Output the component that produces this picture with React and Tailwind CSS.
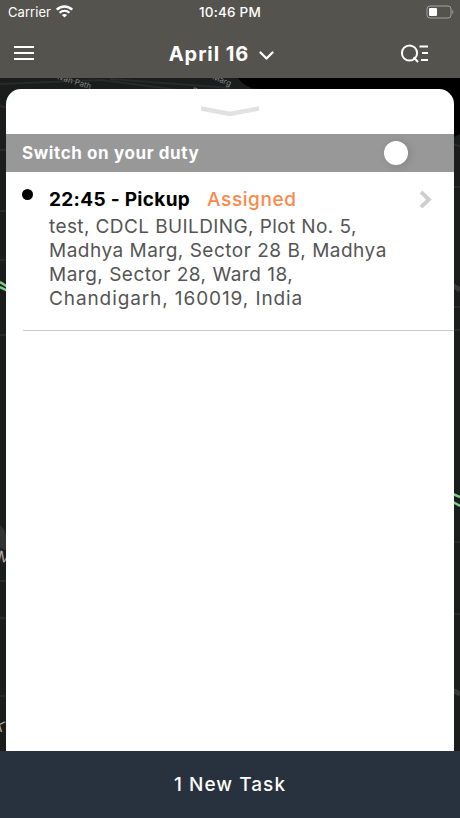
const addressLines = [
  { text: "test, CDCL BUILDING, Plot No. 5,", spacing: "tracking-[0.4px]" },
  { text: "Madhya Marg, Sector 28 B, Madhya", spacing: "tracking-[0.5px]" },
  { text: "Marg, Sector 28, Ward 18,", spacing: "tracking-[0.5px]" },
  { text: "Chandigarh, 160019, India", spacing: "tracking-[0.9px]" },
];

function StatusBar() {
  return (
    <div className="grid h-6 grid-cols-3 items-center pl-2 pr-[6px] text-[13.5px] leading-6">
      <div className="flex items-center gap-[5px]">
        <span className="text-[13px] tracking-[0.05px]">Carrier</span>
        <svg className="-mt-[1px]" width="17" height="13" viewBox="0 0 17 13" fill="none">
          <path d="M.8 4.7C5 .4 12 .4 16.2 4.7" stroke="white" strokeWidth="2.5" />
          <path d="M3.6 7.7C6.4 5.1 10.6 5.1 13.4 7.7" stroke="white" strokeWidth="2.2" />
          <path d="M5.9 10C7.4 8.6 9.6 8.6 11.1 10L8.5 12.6Z" fill="white" />
        </svg>
      </div>
      <span className="-ml-[2px] whitespace-nowrap text-center font-medium tracking-[0.2px]">10:46 PM</span>
      <svg className="justify-self-end" width="28" height="14" viewBox="0 0 28 14" fill="none">
        <rect x="1" y="1" width="24" height="12" rx="3" stroke="#a4a39f" />
        <rect x="3" y="3" width="8" height="8" rx="1" fill="white" />
        <path d="M26.3 5C27.7 5.6 27.7 8.4 26.3 9Z" fill="#a4a39f" />
      </svg>
    </div>
  );
}

function Header() {
  return (
    <header className="relative h-[78px] shrink-0 bg-[#55534e] text-white">
      <StatusBar />
      <div className="grid h-[54px] grid-cols-[60px_1fr_60px] items-center">
        <button className="mt-[3px] pl-[14px]" aria-label="Menu">
          <svg width="20" height="14" viewBox="0 0 20 14" stroke="white" strokeWidth="2">
            <path d="M0 1H20M0 7H20M0 13H20" />
          </svg>
        </button>
        <button className="flex items-center justify-center gap-[10px] pr-[18px]">
          <span className="mt-[5px] whitespace-nowrap pl-[1px] text-[20px] leading-6 font-bold tracking-[0.95px]">April 16</span>
          <svg className="mt-[10px]" width="15" height="10" viewBox="0 0 15 10" fill="none">
            <path d="M1.5 1.5L7.5 7.5L13.5 1.5" stroke="white" strokeWidth="2.2" strokeLinecap="round" strokeLinejoin="round" />
          </svg>
        </button>
        <button className="mt-[5px]" aria-label="Search">
          <svg width="29" height="20" viewBox="0 0 29 20" fill="none" stroke="white" strokeWidth="2">
            <circle cx="9.5" cy="9" r="7.6" />
            <path d="M13.6 13.3L18 18M19.5 2.5H28M22 9H28M21 16H28" />
          </svg>
        </button>
      </div>
    </header>
  );
}

// The strip of map that shows around the sheet
function MapBackdrop() {
  return (
    <svg className="absolute inset-0" width="460" height="818" viewBox="0 0 460 818" fill="none">
      <rect width="460" height="818" fill="#1b1c1c" />
      <path d="M238 78H460V134L454 137V98L430 89H260Q245 89 238 78Z" fill="#000" />
      <path d="M0 84L100 80L180 90M110 79L230 88M0 106L8 108M0 150H8M0 211H8M0 260H8M0 335H8M452 144L460 146M452 187H460M452 307H460M452 330H460M0 581H8M0 618H8M0 696H8M452 542H460M452 614H460" stroke="#292a2a" strokeWidth="2" />
      <path d="M452 285L460 290M452 690L460 694" stroke="#383939" strokeWidth="5" />
      <path d="M0 525Q9 533 8 551L0 548Z" fill="#313332" />
      <path d="M0 282L8 287M0 287L8 291M453 494L460 497M453 502L460 506" stroke="#7fce88" strokeWidth="2.5" />
      <g fill="#858585" fontSize="8">
        <text x="57" y="79" transform="rotate(17 57 79)">ivan Path</text>
        <text x="212" y="79" transform="rotate(22 212 79)">Marg</text>
        <text x="192" y="93" transform="rotate(12 192 93)">Path</text>
      </g>
      <g fill="#aaa" fontSize="15">
        <text x="-3" y="561" transform="rotate(12 -3 561)">M</text>
        <text x="-7" y="729" transform="rotate(20 -7 729)">KY</text>
      </g>
    </svg>
  );
}

function TaskRow() {
  return (
    <article className="ml-[17px] flex h-[159px] border-b border-[#cccccc] pt-[15px]">
      <span className="-ml-[1px] mt-[2px] h-[11px] w-[11px] shrink-0 rounded-full bg-black" />
      <div className="ml-[16px] flex-1">
        <div className="flex h-[24px] whitespace-nowrap pt-[1px] text-[19px] leading-6">
          <span className="font-bold tracking-[0.32px] text-black">22:45 - Pickup</span>
          <span className="ml-[17px] font-medium tracking-[0.58px] text-[#fa894c]">Assigned</span>
        </div>
        <div className="mt-[4px] text-[19px] leading-[24px] text-[#555]">
          {addressLines.map((line) => (
            <p key={line.text} className="whitespace-nowrap">
              <span className={line.spacing}>{line.text}</span>
            </p>
          ))}
        </div>
      </div>
      <svg className="mr-[22px] mt-[3px] shrink-0" width="13" height="19" viewBox="0 0 13 19" fill="none">
        <path d="M2 2L10 9.5L2 17" stroke="#cecece" strokeWidth="3.8" />
      </svg>
    </article>
  );
}

function App() {
  return (
    <div className="relative flex h-[818px] w-[460px] flex-col overflow-hidden font-['Inter','Liberation_Sans',sans-serif]">
      <MapBackdrop />
      <Header />
      <main className="relative mx-[6px] mt-[11px] min-h-0 flex-1 rounded-t-[15px] bg-white">
        <div className="flex h-[45px] justify-center pt-[16px]">
          <svg width="58" height="12" viewBox="0 0 58 12" fill="none">
            <path d="M0 3.5L29 9L58 3.5" stroke="#e1e1e1" strokeWidth="4.5" />
          </svg>
        </div>
        <div className="flex h-[38px] items-center justify-between bg-[#989898] pr-[46px] pl-[16px]">
          <span className="pt-[2px] text-[17px] font-bold tracking-[0.6px] text-white">Switch on your duty</span>
          <span className="h-6 w-6 rounded-full bg-white shadow-[2px_1px_8px_rgba(0,0,0,0.14)]" />
        </div>
        <TaskRow />
      </main>
      <button className="relative h-[67px] shrink-0 bg-[#27323e] pt-[2px] text-[19px] font-medium tracking-[1.05px] text-white">
        1 New Task
      </button>
    </div>
  );
}

export default App;
